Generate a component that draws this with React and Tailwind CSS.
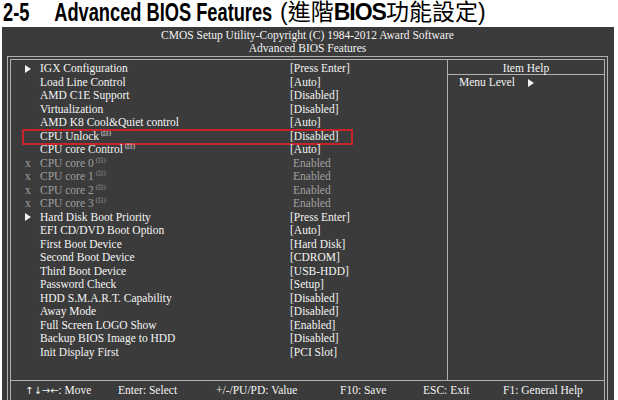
import React from "react";

const serif = { fontFamily: '"Liberation Serif", "Times New Roman", serif' };
const sans = { fontFamily: '"Liberation Sans", Arial, sans-serif' };

const rows = [
  { arrow: true, label: "IGX Configuration", value: "[Press Enter]" },
  { label: "Load Line Control", value: "[Auto]" },
  { label: "AMD C1E Support", value: "[Disabled]" },
  { label: "Virtualization", value: "[Disabled]" },
  { label: "AMD K8 Cool&Quiet control", value: "[Auto]" },
  { label: "CPU Unlock", note: true, value: "[Disabled]", boxed: true },
  { label: "CPU core Control", note: true, value: "[Auto]" },
  { off: true, label: "CPU core 0", note: true, value: "Enabled" },
  { off: true, label: "CPU core 1", note: true, value: "Enabled" },
  { off: true, label: "CPU core 2", note: true, value: "Enabled" },
  { off: true, label: "CPU core 3", note: true, value: "Enabled" },
  { arrow: true, label: "Hard Disk Boot Priority", value: "[Press Enter]" },
  { label: "EFI CD/DVD Boot Option", value: "[Auto]" },
  { label: "First Boot Device", value: "[Hard Disk]" },
  { label: "Second Boot Device", value: "[CDROM]" },
  { label: "Third Boot Device", value: "[USB-HDD]" },
  { label: "Password Check", value: "[Setup]" },
  { label: "HDD S.M.A.R.T. Capability", value: "[Disabled]" },
  { label: "Away Mode", value: "[Disabled]" },
  { label: "Full Screen LOGO Show", value: "[Enabled]" },
  { label: "Backup BIOS Image to HDD", value: "[Disabled]" },
  { label: "Init Display First", value: "[PCI Slot]" },
];

const Arrow = () => (
  <svg width="6" height="8" viewBox="0 0 6 8">
    <path d="M0 0 L6 4 L0 8 Z" fill="#f2f2f2" />
  </svg>
);

const Row = ({ row }) => (
  <div className={`relative flex h-[13.5px] items-center leading-[13.5px] ${row.off ? "text-[#a0a0a0]" : "text-[#f4f4f4]"}`}>
    <div className="flex w-[29px] justify-start pl-[14px]">
      {row.arrow && <Arrow />}
      {row.off && <span>x</span>}
    </div>
    <div className="w-[250px] whitespace-nowrap">
      {row.label}
      {row.note && <sup className="ml-[2px] text-[6px] top-[-5px]">(註)</sup>}
    </div>
    <div className={`whitespace-nowrap ${row.off ? "pl-[3px]" : ""}`}>{row.value}</div>
    {row.boxed && (
      <div className="absolute left-[11px] top-[-1px] h-[16px] w-[331px] border-2 border-[#c8242c]" />
    )}
  </div>
);

export default function App() {
  return (
    <div className="h-[400px] w-[618px] overflow-hidden bg-white">
      {/* title: condensed latin (scaled), upright CJK */}
      <div className="flex h-[27px] items-start pl-[3px] text-black" style={sans}>
        <div className="-mr-[92px] h-[25px] w-[369px] shrink-0 text-[25px] leading-[25px]">
          <span className="inline-block origin-left scale-x-[0.73] whitespace-nowrap align-top font-bold">
            2-5<span className="ml-[34px]">Advanced BIOS Features</span>
          </span>
        </div>
        <span
          className="whitespace-nowrap text-[23px] leading-[25px]"
          style={{ fontFamily: '"Liberation Sans", "Noto Sans CJK TC", sans-serif' }}
        >
          (進階<b className="tracking-[-1px]">BIOS</b>功能設定)
        </span>
      </div>
      <div className="ml-[2px] h-[373px] w-[612px] bg-[#3b3b3b] pl-[5px] pr-[6px] pt-[2px] text-[11.5px]" style={serif}>
        <div className="text-center leading-[13px] text-[#f2f2f2]">
          CMOS Setup Utility-Copyright (C) 1984-2012 Award Software
        </div>
        <div className="text-center leading-[13px] text-[#f2f2f2]">Advanced BIOS Features</div>
        <div className="mt-[1px] h-[400px] border border-[#b0b0b0] p-[2px]">
          <div className="flex h-full flex-col border border-[#b0b0b0]">
            <div className="flex h-[321px] border-b border-[#b0b0b0]">
              <div className="w-[437px] border-r border-[#b0b0b0] pt-[2px]">
                {rows.map((r, i) => (
                  <Row key={i} row={r} />
                ))}
              </div>
              <div className="flex-1 text-[#f4f4f4]">
                <div className="h-[15px] border-b border-[#b0b0b0] pt-[1px] text-center leading-[14px]">Item Help</div>
                <div className="flex items-center gap-[13px] pl-[11px] pt-[1px] leading-[13px]">
                  Menu Level <Arrow />
                </div>
              </div>
            </div>
            <div className="flex h-[20px] items-center pl-[14px] text-[#f4f4f4] whitespace-nowrap">
              <span className="w-[93px]">
                <span className="text-[10px]" style={{ fontFamily: '"DejaVu Sans", sans-serif' }}>↑↓→←</span>: Move
              </span>
              <span className="w-[98px]">Enter: Select</span>
              <span className="w-[124px]">+/-/PU/PD: Value</span>
              <span className="w-[83px]">F10: Save</span>
              <span className="w-[80px]">ESC: Exit</span>
              <span>F1: General Help</span>
            </div>
          </div>
        </div>
      </div>
    </div>
  );
}
